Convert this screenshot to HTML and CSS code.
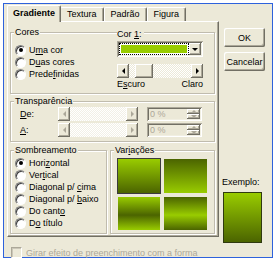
FILE: index.html
```html
<!DOCTYPE html>
<html lang="pt">
<head>
  <meta charset="UTF-8">
  <title>Efeitos de preenchimento</title>
  <link rel="stylesheet" href="styles.css">
</head>
<body>

  <div class="window">
    <div class="main">
      <div class="sheet">
        <div class="tabs">
          <div class="tab active">Gradiente</div>
          <div class="tab">Textura</div>
          <div class="tab">Padrão</div>
          <div class="tab">Figura</div>
        </div>

        <div class="panel">
          <!-- Cores -->
          <div class="group cores">
            <span class="legend">Cores</span>
            <div class="options">
              <div class="radio checked"><i></i><span>U<u>m</u>a cor</span></div>
              <div class="radio"><i></i><span>D<u>u</u>as cores</span></div>
              <div class="radio"><i></i><span>Prede<u>f</u>inidas</span></div>
            </div>
            <div class="color-col">
              <div class="color-label">Cor <u>1</u>:</div>
              <div class="combo">
                <div class="combo-value"><span></span></div>
                <div class="btn combo-btn"><b class="arrow down"></b></div>
              </div>
              <div class="scroll">
                <div class="btn sb-btn"><b class="arrow left"></b></div>
                <div class="sb-track"><div class="btn thumb"></div></div>
                <div class="btn sb-btn"><b class="arrow right"></b></div>
              </div>
              <div class="ends"><span>E<u>s</u>curo</span><span>Claro</span></div>
            </div>
          </div>

          <!-- Transparência -->
          <div class="group transp">
            <span class="legend">Transparência</span>
            <div class="trow">
              <span class="tlabel"><u>D</u>e:</span>
              <div class="scroll off">
                <div class="btn sb-btn"><b class="arrow left"></b></div>
                <div class="sb-track"></div>
                <div class="btn sb-btn"><b class="arrow right"></b></div>
              </div>
              <div class="spin">
                <span class="spin-text">0 %</span>
                <div class="spin-btns">
                  <div class="btn"><b class="arrow up"></b></div>
                  <div class="btn"><b class="arrow down"></b></div>
                </div>
              </div>
            </div>
            <div class="trow">
              <span class="tlabel"><u>A</u>:</span>
              <div class="scroll off">
                <div class="btn sb-btn"><b class="arrow left"></b></div>
                <div class="sb-track"></div>
                <div class="btn sb-btn"><b class="arrow right"></b></div>
              </div>
              <div class="spin">
                <span class="spin-text">0 %</span>
                <div class="spin-btns">
                  <div class="btn"><b class="arrow up"></b></div>
                  <div class="btn"><b class="arrow down"></b></div>
                </div>
              </div>
            </div>
          </div>

          <div class="bottom-row">
            <!-- Sombreamento -->
            <div class="group shading">
              <span class="legend">Sombreamento</span>
              <div class="radio checked"><i></i><span>Hori<u>z</u>ontal</span></div>
              <div class="radio"><i></i><span>Ver<u>t</u>ical</span></div>
              <div class="radio"><i></i><span>Diagonal p/ <u>c</u>ima</span></div>
              <div class="radio"><i></i><span>Diagonal p/ <u>b</u>aixo</span></div>
              <div class="radio"><i></i><span>Do cant<u>o</u></span></div>
              <div class="radio"><i></i><span>D<u>o</u> título</span></div>
            </div>

            <!-- Variações -->
            <div class="group variants">
              <span class="legend">Var<u>i</u>ações</span>
              <div class="swatches">
                <div class="swatch v1 selected"></div>
                <div class="swatch v2"></div>
                <div class="swatch v3"></div>
                <div class="swatch v4"></div>
              </div>
            </div>
          </div>
        </div>
      </div>

      <div class="side">
        <div class="btn button">OK</div>
        <div class="btn button">Cancelar</div>
        <div class="sample-label">Exemplo:</div>
        <div class="sample"></div>
      </div>
    </div>

    <div class="check">
      <i></i><span>Girar efeito de preenchimento com a forma</span>
    </div>
  </div>

</body>
</html>
```

FILE: styles.css
```css
* {
  box-sizing: border-box;
}
body {
  margin: 0;
  background: #fff;
  font-family: 'Liberation Sans', Arial, sans-serif;
  font-size: 9px;
  color: #000;
}
.window {
  width: 270px;
  height: 255px;
  margin: 3px 0 0 3px;
  border: 1px solid #2e62dc;
  background: #ece9d8;
  padding: 1px 0 0 3px;
  display: flex;
  flex-direction: column;
}
.main {
  display: flex;
}
.sheet {
  width: 212px;
}

/* raised 3D look used by buttons */
.btn {
  background: #ece9d8;
  box-shadow: inset -1px -1px #716f64, inset 1px 1px #fff, inset -2px -2px #aca899;
  display: flex;
  align-items: center;
  justify-content: center;
}
.arrow {
  width: 0;
  height: 0;
  border: 3px solid transparent;
}
.arrow.down { border-top: 3px solid #000; border-bottom: 0; margin-top: 1px; }
.arrow.up { border-bottom: 3px solid #000; border-top: 0; }
.arrow.left { border-right: 3px solid #000; border-left: 0; }
.arrow.right { border-left: 3px solid #000; border-right: 0; }

/* Tabs */
.tabs {
  display: flex;
  align-items: flex-end;
  height: 16px;
}
.tab {
  height: 14px;
  line-height: 13px;
  padding: 0 6px;
  border: 1px solid;
  border-color: #fff #716f64 transparent #fff;
  border-bottom: none;
  border-radius: 2px 2px 0 0;
  box-shadow: inset -1px 0 #aca899;
}
.tab.active {
  height: 17px;
  line-height: 15px;
  font-weight: bold;
  padding: 0 5px;
  margin: 0 -1px -1px 0;
  background: #ece9d8;
  position: relative;
  z-index: 1;
}
.panel {
  height: 216px;
  border: 1px solid;
  border-color: #fff #716f64 #716f64 #fff;
  box-shadow: inset -1px -1px #aca899;
  padding: 10px 3px 0 2px;
}

/* Group boxes */
.group {
  position: relative;
  border: 1px solid #c0bcae;
  box-shadow: inset 1px 1px #fff, 1px 1px #fff;
}
.legend {
  position: absolute;
  top: -6px;
  left: 3px;
  padding: 0 1px;
  line-height: 11px;
  background: #ece9d8;
}

/* Radio buttons */
.radio {
  display: flex;
  align-items: center;
  height: 12px;
}
.radio i {
  width: 11px;
  height: 11px;
  border-radius: 50%;
  background: #fff;
  border: 1px solid;
  border-color: #808080 #fff #fff #808080;
  box-shadow: inset 1px 1px #404040;
  margin-right: 3px;
  display: flex;
  align-items: center;
  justify-content: center;
}
.radio.checked i::after {
  content: "";
  width: 4px;
  height: 4px;
  border-radius: 50%;
  background: #000;
}

/* Cores */
.cores {
  height: 62px;
  display: flex;
  padding: 11px 0 0 4px;
}
.options {
  width: 102px;
}
.color-col {
  width: 86px;
  margin-top: -15px;
}
.color-label {
  display: inline-block;
  line-height: 10px;
  padding-right: 2px;
  background: #ece9d8;
}
.combo {
  display: flex;
  height: 16px;
  margin-top: 2px;
  padding: 2px;
  background: #fff;
  box-shadow: inset 1px 1px #aca899, inset -1px -1px #fff, inset 2px 2px #716f64, inset -2px -2px #f1efe2;
}
.combo-value {
  flex: 1;
  border: 1px dotted #000;
  padding: 1px;
}
.combo-value span {
  display: block;
  height: 100%;
  background: #99cc00;
}
.combo-btn {
  width: 12px;
}
.scroll {
  display: flex;
  height: 14px;
  margin-top: 7px;
}
.sb-btn {
  width: 12px;
}
.sb-track {
  flex: 1;
  background: repeating-conic-gradient(#fff 0 25%, #ece9d8 0 50%) 0 0 / 2px 2px;
}
.thumb {
  width: 18px;
  height: 100%;
  margin-left: 6px;
}
.ends {
  display: flex;
  justify-content: space-between;
  line-height: 10px;
  margin-top: 1px;
}

/* Transparência */
.transp {
  height: 41px;
  margin-top: 7px;
  padding: 5px 0 0 9px;
}
.trow {
  display: flex;
  align-items: center;
  height: 14px;
  margin-bottom: 2px;
}
.tlabel {
  width: 38px;
}
.scroll.off {
  width: 80px;
  margin-top: 0;
}
.scroll.off .arrow.left { border-right-color: #aca899; }
.scroll.off .arrow.right { border-left-color: #aca899; }
.scroll.off .sb-track {
  background: repeating-conic-gradient(#fff 0 25%, #f2f0e6 0 50%) 0 0 / 2px 2px;
}
.spin {
  display: flex;
  width: 55px;
  height: 14px;
  margin-left: 9px;
  padding: 2px;
  box-shadow: inset 1px 1px #aca899, inset -1px -1px #fff, inset 2px 2px #716f64, inset -2px -2px #f1efe2;
}
.spin-text {
  flex: 1;
  color: #aca899;
  line-height: 10px;
  padding-left: 1px;
}
.spin-btns {
  width: 13px;
  display: flex;
  flex-direction: column;
}
.spin-btns .btn {
  flex: 1;
}
.spin-btns .arrow.up { border-bottom-color: #aca899; }
.spin-btns .arrow.down { border-top-color: #aca899; margin-top: 0; }

/* Sombreamento / Variações */
.bottom-row {
  display: flex;
  gap: 3px;
  height: 84px;
  margin-top: 8px;
}
.shading {
  width: 97px;
  padding: 6px 0 0 4px;
}
.variants {
  width: 105px;
  padding: 7px 0 0 6px;
}
.swatches {
  display: grid;
  grid-template-columns: 44px 45px;
  grid-template-rows: 36px 35px;
  gap: 2px;
}
.swatch {
  border: 1px solid #ece9d8;
}
.swatch.selected {
  border-color: #3b3b3b;
}
.v1 { background: linear-gradient(#99cc00, #4b6400); }
.v2 { background: linear-gradient(#4b6400, #99cc00); }
.v3 { background: linear-gradient(#99cc00, #4b6400 55%, #99cc00); }
.v4 { background: linear-gradient(#4b6400, #99cc00 55%, #4b6400); }

/* Right column */
.side {
  width: 42px;
  margin-left: 3px;
  padding-top: 23px;
}
.button {
  width: 41px;
  height: 19px;
  margin: 0 0 5px 2px;
  line-height: 10px;
  border-radius: 2px;
}
.sample-label {
  line-height: 10px;
  margin-top: 106px;
}
.sample {
  width: 39px;
  height: 51px;
  margin: 5px 0 0 1px;
  border: 1px solid #2f3a10;
  background: linear-gradient(#99cc00, #4b6400);
}

/* Bottom checkbox */
.check {
  display: flex;
  align-items: center;
  height: 12px;
  margin: 4px 0 0 4px;
  color: #aca899;
}
.check i {
  width: 11px;
  height: 11px;
  margin-right: 4px;
  border: 1px solid;
  border-color: #aca899 #fff #fff #aca899;
  box-shadow: inset 1px 1px #cbc7b8;
}
```
